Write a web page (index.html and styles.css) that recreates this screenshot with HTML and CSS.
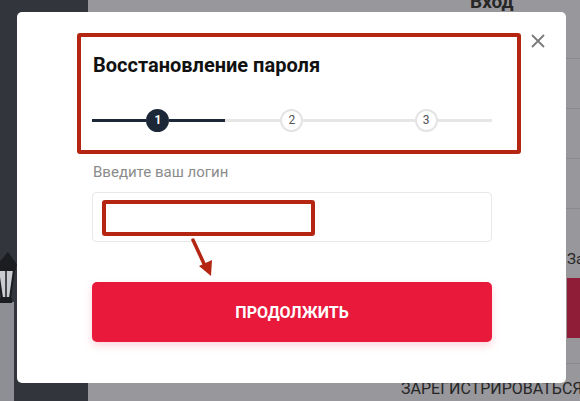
FILE: index.html
```html
<!DOCTYPE html>
<html lang="ru">
<head>
<meta charset="utf-8">
<link rel="stylesheet" href="styles.css">
</head>
<body>
<div class="page">
  <div class="left">
    <svg class="lamp" width="30" height="160" viewBox="0 0 30 160">
      <rect x="0" y="50" width="14" height="110" fill="#8e8f94"/>
      <path d="M-4 14 L8 0 L18 14 Z" fill="#1b1d20"/>
      <rect x="-4" y="14" width="20" height="4" fill="#1b1d20"/>
      <path d="M-2 18 L14 18 L10 46 L2 46 Z" fill="#c9cbd0" stroke="#1b1d20" stroke-width="2"/>
      <path d="M6 18 L6 46" stroke="#1b1d20" stroke-width="1.5"/>
      <rect x="0" y="46" width="12" height="5" fill="#1b1d20"/>
    </svg>
  </div>
  <div class="right">
    <div class="login-title">Вход</div>
    <div class="line"></div>
    <div class="line"></div>
    <div class="line"></div>
    <div class="line"></div>
    <div class="save">Запомнить меня</div>
    <div class="bg-btn"></div>
    <div class="line line-b"></div>
    <div class="register">ЗАРЕГИСТРИРОВАТЬСЯ</div>
  </div>
</div>

<div class="modal">
  <button class="close" aria-label="Закрыть">
    <svg width="14" height="14" viewBox="0 0 14 14"><path d="M1 1 L13 13 M13 1 L1 13" stroke="#7a7a7a" stroke-width="1.8" fill="none"/></svg>
  </button>
  <h2 class="title">Восстановление пароля</h2>
  <div class="stepper">
    <div class="seg seg-done"></div>
    <div class="step step-active">1</div>
    <div class="seg seg-done"></div>
    <div class="seg seg-todo"></div>
    <div class="step">2</div>
    <div class="seg seg-todo"></div>
    <div class="seg seg-todo"></div>
    <div class="step">3</div>
    <div class="seg seg-todo"></div>
  </div>
  <label class="label">Введите ваш логин</label>
  <div class="input"></div>
  <button class="submit">ПРОДОЛЖИТЬ</button>

  <div class="mark mark-head"></div>
  <div class="mark mark-input"></div>
  <svg class="arrow" width="30" height="44" viewBox="0 0 30 44">
    <path d="M4 2 L17 30" stroke="#b42513" stroke-width="3.5" stroke-linecap="round"/>
    <path d="M10 28 L22 38 L23 22 Z" fill="#b42513"/>
  </svg>
</div>
</body>
</html>
```
FILE: styles.css
```css
* { box-sizing: border-box; }
html, body { margin: 0; padding: 0; }
body {
  width: 580px;
  height: 401px;
  overflow: hidden;
  font-family: Roboto, "Liberation Sans", Arial, sans-serif;
  position: relative;
}
.page {
  display: flex;
  width: 580px;
  height: 401px;
}
.left {
  flex: none;
  width: 88px;
  background: #32363c;
  position: relative;
}
.lamp {
  position: absolute;
  left: 0;
  top: 252px;
}
.right {
  flex: 1;
  min-width: 0;
  overflow: hidden;
  background: #98989c;
  padding-left: 312px;
  display: flex;
  flex-direction: column;
}
.right > * { flex: none; }
.login-title {
  margin-top: -10px;
  padding-left: 70px;
  font-size: 19px;
  font-weight: 700;
  color: #262626;
  height: 24px;
  line-height: 24px;
  white-space: nowrap;
}
.line {
  height: 1px;
  background: #8a8a8e;
  margin-top: 49px;
}
.line:nth-child(2) { margin-top: 44px; }
.save {
  margin-top: 41px;
  padding-left: 167px;
  font-size: 15px;
  color: #262626;
  line-height: 18px;
  white-space: nowrap;
}
.bg-btn {
  margin-top: 10px;
  margin-left: 167px;
  height: 60px;
  background: #8f1d38;
}
.line-b { margin-top: 25px; }
.register {
  margin-top: 15px;
  padding-left: 1px;
  font-size: 16px;
  color: #262626;
  white-space: nowrap;
  line-height: 19px;
}

.modal {
  position: absolute;
  left: 17px;
  top: 12px;
  width: 549px;
  height: 371px;
  background: #fff;
  border-radius: 5px;
  padding: 41px 74px 0 75px;
  display: flex;
  flex-direction: column;
}
.close {
  position: absolute;
  right: 21px;
  top: 22px;
  border: 0;
  background: none;
  padding: 0;
  width: 14px;
  height: 14px;
  display: flex;
}
.title {
  margin: 0;
  font-size: 20px;
  font-weight: 700;
  line-height: 24px;
  color: #111;
  padding-left: 1px;
}
.stepper {
  margin-top: 31px;
  height: 24px;
  display: flex;
  align-items: center;
}
.seg { flex: 1; height: 3px; }
.seg-done { background: #1c2838; }
.seg-todo { background: #e6e6e6; }
.seg:first-child, .seg:last-child { flex: 0.98; }
.step {
  width: 23px;
  height: 23px;
  border-radius: 50%;
  border: 2px solid #e4e4e4;
  background: #fff;
  color: #555;
  font-size: 12px;
  display: flex;
  align-items: center;
  justify-content: center;
  flex: none;
}
.step-active {
  background: #1c2838;
  border-color: #1c2838;
  color: #fff;
  font-weight: 700;
}
.label {
  margin-top: 30px;
  font-size: 15px;
  line-height: 20px;
  color: #8b8b8b;
  padding-left: 1px;
}
.input {
  margin-top: 10px;
  height: 50px;
  border: 1px solid #e8e8e8;
  border-radius: 4px;
}
.submit {
  margin-top: 40px;
  height: 60px;
  border: 0;
  border-radius: 5px;
  background: #e8193b;
  color: #fff;
  font-family: Roboto, "Liberation Sans", Arial, sans-serif;
  font-size: 16px;
  font-weight: 700;
  box-shadow: 0 4px 8px rgba(232, 25, 59, 0.18);
}

.mark {
  position: absolute;
  border: 4px solid #b52612;
  border-radius: 3px;
}
.mark-head {
  left: 60px;
  top: 21px;
  width: 444px;
  height: 121px;
}
.mark-input {
  left: 85px;
  top: 188px;
  width: 213px;
  height: 36px;
}
.arrow {
  position: absolute;
  left: 172px;
  top: 226px;
}
```
